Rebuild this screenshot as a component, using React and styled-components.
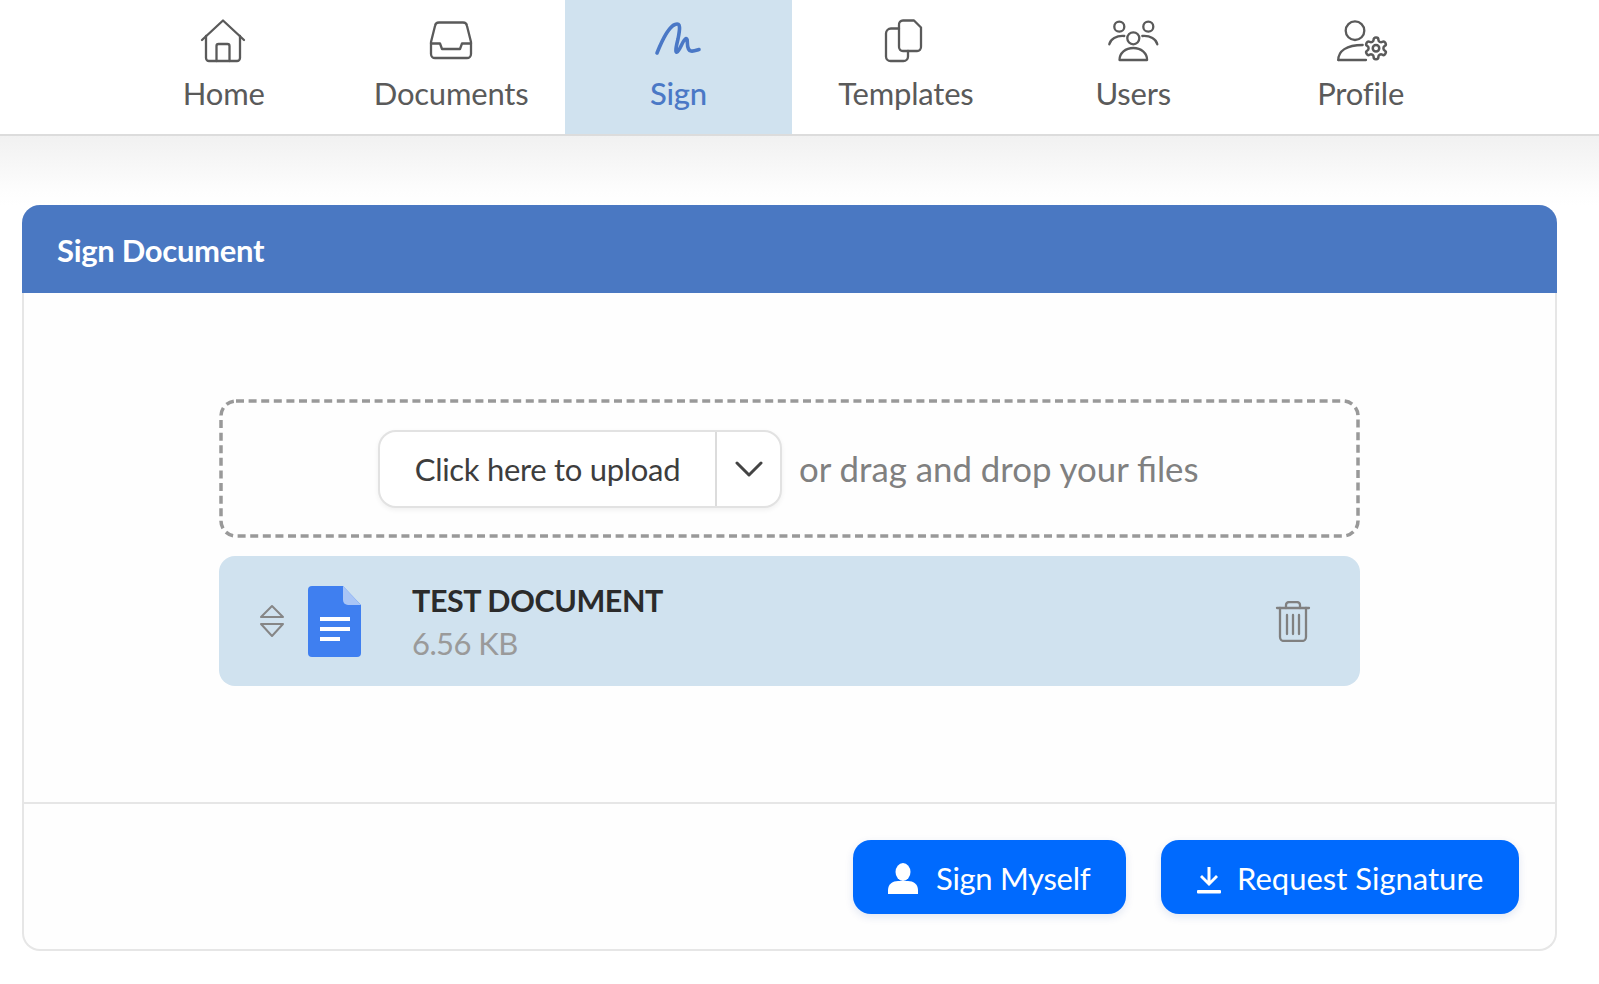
import React from 'react'
import styled, { createGlobalStyle } from 'styled-components'

const GlobalStyle = createGlobalStyle`
  html, body {
    margin: 0;
    padding: 0;
    background: #ffffff;
    font-family: "Lato", "Liberation Sans", sans-serif;
  }
  * {
    box-sizing: border-box;
  }
`

const Page = styled.div`
  width: 1599px;
  height: 984px;
  overflow: hidden;
  background: #ffffff;
`

const Nav = styled.nav`
  display: flex;
  height: 136px;
  padding-left: 110px;
  background: #ffffff;
  border-bottom: 2px solid #dcdcdc;
`

const Tab = styled.div`
  display: flex;
  flex-direction: column;
  align-items: center;
  width: 227.4px;
  padding-top: 19px;
  background: ${p => (p.$active ? '#d0e2ef' : 'transparent')};
  color: ${p => (p.$active ? '#4a78c6' : '#5a5a5a')};
  font-size: 31px;
  letter-spacing: -0.2px;
  font-weight: ${p => (p.$active ? 500 : 400)};
`

const TabIcon = styled.svg`
  width: 50px;
  height: 44px;
  overflow: visible;
  fill: none;
  stroke: currentColor;
  stroke-width: 2.3;
  stroke-linecap: round;
  stroke-linejoin: round;
`

const SignStroke = styled.path`
  stroke-width: 3.6;
`

const TabLabel = styled.span`
  margin-top: 11px;
  line-height: 38px;
`

const Main = styled.main`
  padding: 69px 42px 0 22px;
  background: linear-gradient(#f1f1f1 0, #fdfdfd 55px, #ffffff 70px);
`

const Panel = styled.section`
  height: 746px;
  display: flex;
  flex-direction: column;
  background: #fefefe;
  border: 2px solid #e6e6e6;
  border-top: none;
  border-radius: 18px;
`

const PanelHeader = styled.header`
  height: 88px;
  margin: 0 -2px;
  padding: 2px 0 0 35px;
  display: flex;
  align-items: center;
  background: #4a78c2;
  border-radius: 18px 18px 0 0;
  color: #ffffff;
  font-size: 31px;
  font-weight: 700;
  letter-spacing: -0.3px;
`

const PanelBody = styled.div`
  flex: 1;
  padding: 106px 195px 0;
  display: flex;
  flex-direction: column;
  gap: 18px;
  border-bottom: 2px solid #e6e6e6;
`

const DropZone = styled.div`
  position: relative;
  height: 139px;
  padding-left: 159px;
  display: flex;
  align-items: center;
  gap: 17px;
`

const DashFrame = styled.svg`
  position: absolute;
  top: 0;
  left: 0;
  width: 100%;
  height: 100%;
  fill: none;
  stroke: #999999;
  stroke-width: 3.5;
  stroke-dasharray: 8 4.6;
`

const UploadGroup = styled.div`
  display: flex;
  height: 78px;
  width: 404px;
  background: #ffffff;
  border: 2px solid #e2e2e2;
  border-radius: 18px;
  box-shadow: 0 2px 5px rgba(0, 0, 0, 0.06);
`

const UploadButton = styled.div`
  width: 337px;
  display: flex;
  align-items: center;
  justify-content: center;
  color: #3d3d3d;
  font-size: 31px;
  letter-spacing: -0.3px;
  border-right: 2px solid #dcdcdc;
`

const UploadCaret = styled.div`
  flex: 1;
  display: flex;
  align-items: center;
  justify-content: center;
  color: #444444;
`

const DropHint = styled.span`
  color: #808080;
  font-size: 34.8px;
`

const FileRow = styled.div`
  height: 130px;
  padding: 0 49px 0 40px;
  display: flex;
  align-items: center;
  background: #d0e2ef;
  border-radius: 16px;
`

const SortIcon = styled.svg`
  width: 26px;
  height: 34px;
  fill: none;
  stroke: #868686;
  stroke-width: 2;
  stroke-linejoin: round;
`

const FileIcon = styled.svg`
  width: 53px;
  height: 71px;
  margin-left: 23px;
`

const FileInfo = styled.div`
  flex: 1;
  margin-left: 51px;
  display: flex;
  flex-direction: column;
  gap: 5px;
`

const FileName = styled.span`
  color: #2b2b2b;
  font-size: 30.5px;
  font-weight: 700;
  letter-spacing: -0.4px;
  line-height: 38px;
`

const FileSize = styled.span`
  color: #9a9a9a;
  font-size: 31px;
  letter-spacing: -0.6px;
  line-height: 38px;
`

const TrashIcon = styled.svg`
  width: 36px;
  height: 41px;
  fill: none;
  stroke: #808080;
  stroke-width: 2.3;
  stroke-linecap: round;
  stroke-linejoin: round;
`

const PanelFooter = styled.footer`
  height: 145px;
  padding: 36px 36px 0 0;
  display: flex;
  justify-content: flex-end;
  gap: 35px;
`

const ActionButton = styled.div`
  width: ${p => p.$width}px;
  height: 74px;
  padding: 2px 0 0 33px;
  display: flex;
  align-items: center;
  gap: ${p => p.$gap}px;
  background: #006afe;
  color: #ffffff;
  font-size: 31px;
  letter-spacing: ${p => p.$tracking}px;
  border-radius: 18px;
  box-shadow: 0 3px 8px rgba(0, 60, 160, 0.12);
`

const ButtonIcon = styled.svg`
  width: 34px;
  height: 34px;
  fill: #ffffff;
`

const tabs = [
  {
    label: 'Home',
    icon: (
      <>
        <path d="M3 21 24 1.500 45 21" />
        <path d="M7 17v22a3 3 0 0 0 3 3h28a3 3 0 0 0 3-3V17" />
        <path d="M17.500 42V27a2 2 0 0 1 2-2h9a2 2 0 0 1 2 2v15" />
      </>
    ),
  },
  {
    label: 'Documents',
    icon: (
      <>
        <path d="M5 23 9 7a4 4 0 0 1 4-3.500h24A4 4 0 0 1 41 7l4 16v12a4 4 0 0 1-4 4H9a4 4 0 0 1-4-4z" />
        <path d="M5 24.500h9l2 5.500h18l2-5.500h9" />
      </>
    ),
  },
  {
    label: 'Sign',
    active: true,
    icon: (
      <SignStroke d="M4 34C8 24 15 8 22 5.500 28 3 27 10 25 20c-2 8-3 14-1 13 3-1 6-13 9-13.500s-1 11.500 5 12.500c3 .5 6-1 8-1.500" />
    ),
  },
  {
    label: 'Templates',
    icon: (
      <>
        <path d="M18 6a4 4 0 0 1 4-4.500h11l7 7v19a4 4 0 0 1-4 4.500H22a4 4 0 0 1-4-4.500z" />
        <path d="M18 9.500h-8a5 5 0 0 0-5 5v23a4.500 4.500 0 0 0 4.500 4.500h13a4.500 4.500 0 0 0 4.500-4.500V32" />
      </>
    ),
  },
  {
    label: 'Users',
    icon: (
      <>
        <circle cx="11.300" cy="7.700" r="5" />
        <circle cx="40.300" cy="7.700" r="5" />
        <circle cx="25.300" cy="19.300" r="6" />
        <path d="M1.300 25.300c1-5 7-9 15-8.300" />
        <path d="M49.300 25.300c-1-5-7-9-15-8.300" />
        <path d="M11.500 41c0-7 6-12 13.800-12s13.800 5 13.800 12z" />
      </>
    ),
  },
  {
    label: 'Profile',
    icon: (
      <>
        <circle cx="19" cy="11.700" r="9.300" />
        <path d="M2.300 41c0-9 8-15 24.400-15" />
        <path d="M2.300 41H30" />
        <svg x="27" y="16.300" width="26" height="26" viewBox="0 0 24 24">
          <path d="M12.220 2h-.44a2 2 0 0 0-2 2v.18a2 2 0 0 1-1 1.730l-.43.25a2 2 0 0 1-2 0l-.15-.08a2 2 0 0 0-2.730.73l-.22.38a2 2 0 0 0 .73 2.730l.15.1a2 2 0 0 1 1 1.720v.51a2 2 0 0 1-1 1.740l-.15.09a2 2 0 0 0-.73 2.730l.22.38a2 2 0 0 0 2.730.73l.15-.08a2 2 0 0 1 2 0l.43.25a2 2 0 0 1 1 1.730V20a2 2 0 0 0 2 2h.44a2 2 0 0 0 2-2v-.18a2 2 0 0 1 1-1.730l.43-.25a2 2 0 0 1 2 0l.15.08a2 2 0 0 0 2.730-.73l.22-.39a2 2 0 0 0-.73-2.730l-.15-.08a2 2 0 0 1-1-1.740v-.5a2 2 0 0 1 1-1.740l.15-.09a2 2 0 0 0 .73-2.730l-.22-.38a2 2 0 0 0-2.730-.73l-.15.08a2 2 0 0 1-2 0l-.43-.25a2 2 0 0 1-1-1.730V4a2 2 0 0 0-2-2z" />
          <circle cx="12" cy="12" r="3" />
        </svg>
      </>
    ),
  },
]

export default function App() {
  return (
    <Page>
      <GlobalStyle />
      <Nav>
        {tabs.map(tab => (
          <Tab key={tab.label} $active={tab.active}>
            <TabIcon viewBox="0 0 50 44">{tab.icon}</TabIcon>
            <TabLabel>{tab.label}</TabLabel>
          </Tab>
        ))}
      </Nav>
      <Main>
        <Panel>
          <PanelHeader>Sign Document</PanelHeader>
          <PanelBody>
            <DropZone>
              <DashFrame viewBox="0 0 1141 139">
                <rect x="2" y="2" width="1137" height="135" rx="15" />
              </DashFrame>
              <UploadGroup>
                <UploadButton>Click here to upload</UploadButton>
                <UploadCaret>
                  <svg width="28" height="16" viewBox="0 0 28 16" fill="none" stroke="currentColor" strokeWidth="3" strokeLinecap="round" strokeLinejoin="round">
                    <path d="M2 2l12 12L26 2" />
                  </svg>
                </UploadCaret>
              </UploadGroup>
              <DropHint>or drag and drop your files</DropHint>
            </DropZone>
            <FileRow>
              <SortIcon viewBox="0 0 26 34">
                <path d="M13 2 2 13h22z" />
                <path d="M2 20h22L13 32z" />
              </SortIcon>
              <FileIcon viewBox="0 0 53 71">
                <path fill="#3f7ff0" d="M4 0h31l18 19v48a4 4 0 0 1-4 4H4a4 4 0 0 1-4-4V4a4 4 0 0 1 4-4z" />
                <path fill="#a9c5f6" d="M35 0l18 19H40a5 5 0 0 1-5-5z" />
                <path fill="#ffffff" d="M12 31h30v4H12zM12 41h30v4H12zM12 51h20v4H12z" />
              </FileIcon>
              <FileInfo>
                <FileName>TEST DOCUMENT</FileName>
                <FileSize>6.56 KB</FileSize>
              </FileInfo>
              <TrashIcon viewBox="0 0 36 41">
                <path d="M2 7h32" />
                <path d="M11 7V4a3 3 0 0 1 3-3h8a3 3 0 0 1 3 3v3" />
                <path d="M5 7v29a4 4 0 0 0 4 4h18a4 4 0 0 0 4-4V7" />
                <path d="M12 14v19M18 14v19M24 14v19" />
              </TrashIcon>
            </FileRow>
          </PanelBody>
          <PanelFooter>
            <ActionButton $width={273} $gap={16} $tracking={-0.3}>
              <ButtonIcon viewBox="0 0 34 34">
                <ellipse cx="17" cy="11" rx="7.500" ry="9" />
                <path d="M2 33v-4c0-6 5-9 10-9h10c5 0 10 3 10 9v4z" />
              </ButtonIcon>
              Sign Myself
            </ActionButton>
            <ActionButton $width={358} $gap={9} $tracking={0}>
              <ButtonIcon viewBox="0 0 34 34">
                <path d="M13.500 6h3v13.500l5.500-5.500 2 2-9 9-9-9 2-2 5.500 5.500z" />
                <path d="M4 29h22a1 1 0 0 1 1 1v1.500a1 1 0 0 1-1 1H4a1 1 0 0 1-1-1V30a1 1 0 0 1 1-1z" />
              </ButtonIcon>
              Request Signature
            </ActionButton>
          </PanelFooter>
        </Panel>
      </Main>
    </Page>
  )
}
